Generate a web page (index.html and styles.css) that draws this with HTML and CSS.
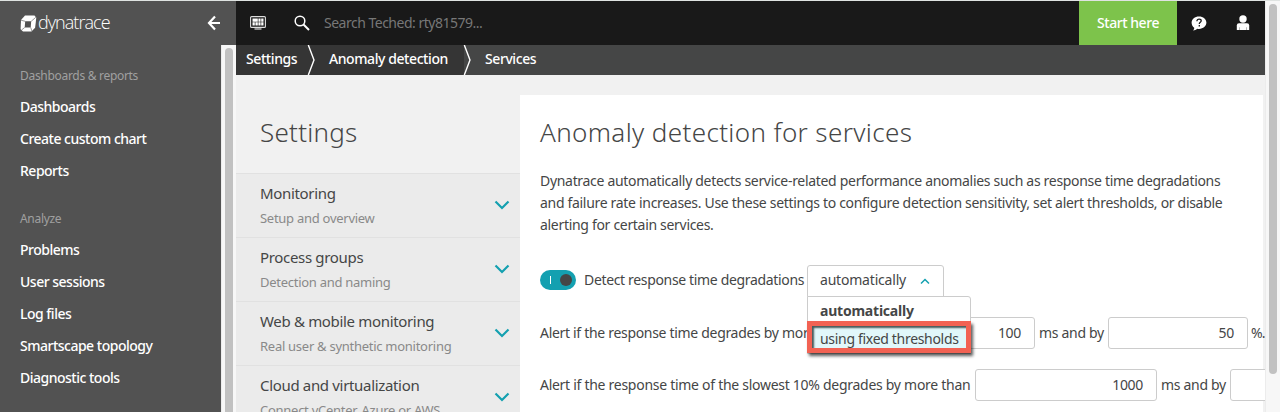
FILE: index.html
```html
<!DOCTYPE html>
<html lang="en">
<head>
<meta charset="utf-8">
<title>Anomaly detection for services</title>
<link rel="stylesheet" href="styles.css">
</head>
<body>
<div class="app">
  <aside class="sidebar">
    <div class="brand">
      <svg class="cube" width="17" height="17" viewBox="0 0 17 17"><path d="M5 .5h9.500l1.800 2.300-1.200 10-3.600 3.700H3L.6 14.200 1 5z" fill="#fff"/><path d="M5.200 6.300h6l-.5 6.200h-6z" fill="#525252"/><path d="M1 5.200l4.200 1.100M11.200 6.300l4.600-4M10.700 12.500l1.300 3.800M4.700 12.500L1.500 15" stroke="#525252" stroke-width=".6"/></svg>
      <span class="wordmark">dynatrace</span>
      <svg class="back" width="14" height="16" viewBox="0 0 14 16" fill="none" stroke="#fff" stroke-width="2.200"><path d="M8 1.500L2 8l6 6.500M1.500 8H13"/></svg>
    </div>
    <nav class="nav">
      <h4 class="group">Dashboards &amp; reports</h4>
      <a class="link">Dashboards</a>
      <a class="link">Create custom chart</a>
      <a class="link">Reports</a>
      <h4 class="group second">Analyze</h4>
      <a class="link">Problems</a>
      <a class="link">User sessions</a>
      <a class="link">Log files</a>
      <a class="link">Smartscape topology</a>
      <a class="link">Diagnostic tools</a>
    </nav>
    <div class="track side-track"><div class="thumb"></div></div>
  </aside>
  <div class="page">
    <header class="topbar">
      <svg class="dash-icon" width="16" height="14" viewBox="0 0 16 14"><rect x=".6" y=".6" width="14.800" height="10.800" rx="1" fill="none" stroke="#ddd" stroke-width="1.100"/><path d="M2.500 2.500h5.300v3.200H2.500zM8.400 2.500h2.200v3.200H8.400zM11.200 2.500h2.300v3.200h-2.300zM2.500 6.300h2.300v3.200H2.500zM5.400 6.300h2.400v3.200H5.400zM8.400 6.300h2.200v3.200H8.400zM11.200 6.300h2.300v3.200h-2.300zM4.500 12.500h7v1h-7z" fill="#fff"/></svg>
      <svg class="search-icon" width="16" height="16" viewBox="0 0 16 16" fill="none" stroke="#fff"><circle cx="6" cy="6" r="4.800" stroke-width="1.500"/><path d="M9.500 9.500l5.500 5.500" stroke-width="2"/></svg>
      <span class="search">Search Teched: rty81579...</span>
      <span class="start">Start here</span>
      <svg class="help" width="16" height="15" viewBox="0 0 16 15"><path d="M8 .4c4.200 0 7.400 2.700 7.400 6.200s-3.200 6.300-7.400 6.300c-.7 0-1.300 0-1.900-.2-.9 1-2.300 1.700-4 1.700.8-.8 1.200-1.600 1.100-2.600C1.500 10.700.6 8.800.6 6.600.6 3.100 3.800.4 8 .4z" fill="#fff"/><path d="M5.900 5.200c0-1.400.9-2.100 2.200-2.100 1.200 0 2.100.7 2.100 1.700 0 1.500-1.900 1.400-1.900 3.100M8.300 9v1.400" fill="none" stroke="#191919" stroke-width="1.300"/></svg>
      <svg class="user" width="14" height="16" viewBox="0 0 14 16" fill="#fff"><circle cx="7" cy="4" r="3.700"/><path d="M.8 15V10.500Q.8 8.200 3 8.200h8q2.200 0 2.200 2.300V15z"/><path d="M3.500 12.300V15M10.500 12.300V15" stroke="#999" stroke-width=".7"/></svg>
    </header>
    <div class="crumbs">
      <span class="crumb c1">Settings</span>
      <svg class="sep" width="9" height="30" viewBox="0 0 9 30"><path d="M1.300 0L7 15 1.300 30" fill="none" stroke="#fff" stroke-width="1.400"/></svg>
      <span class="crumb c2">Anomaly detection</span>
      <svg class="sep" width="9" height="30" viewBox="0 0 9 30"><path d="M1.500 0l5.500 15-5.500 15H9V0z" fill="#454646"/><path d="M1.300 0L7 15 1.300 30" fill="none" stroke="#fff" stroke-width="1.400"/></svg>
      <span class="crumb c3">Services</span>
    </div>
    <div class="content">
      <section class="settings">
        <h1 class="heading left-heading">Settings</h1>
        <div class="item"><div><div class="title">Monitoring</div><div class="sub">Setup and overview</div></div><svg class="chev" width="16" height="10" viewBox="0 0 16 10"><path d="M1.500 1.500L8 8l6.500-6.500"/></svg></div>
        <div class="item"><div><div class="title">Process groups</div><div class="sub">Detection and naming</div></div><svg class="chev" width="16" height="10" viewBox="0 0 16 10"><path d="M1.500 1.500L8 8l6.500-6.500"/></svg></div>
        <div class="item"><div><div class="title">Web &amp; mobile monitoring</div><div class="sub">Real user &amp; synthetic monitoring</div></div><svg class="chev" width="16" height="10" viewBox="0 0 16 10"><path d="M1.500 1.500L8 8l6.500-6.500"/></svg></div>
        <div class="item"><div><div class="title">Cloud and virtualization</div><div class="sub">Connect vCenter, Azure or AWS</div></div><svg class="chev" width="16" height="10" viewBox="0 0 16 10"><path d="M1.500 1.500L8 8l6.500-6.500"/></svg></div>
      </section>
      <main class="panel">
        <h1 class="heading main-heading">Anomaly detection for services</h1>
        <p class="intro"><span>Dynatrace automatically detects service-related performance anomalies such as response time degradations</span><br><span>and failure rate increases. Use these settings to configure detection sensitivity, set alert thresholds, or disable</span><br><span>alerting for certain services.</span></p>
        <div class="row first">
          <span class="toggle"><i class="bar"></i><i class="knob"></i></span>
          <span class="label detect">Detect response time degradations</span>
          <div class="select"><span class="value">automatically</span><svg width="10" height="7" viewBox="0 0 10 7"><path d="M1 5.500l4-4 4 4" fill="none" stroke="#14a0b0" stroke-width="1.500"/></svg>
            <div class="menu"><div class="option selected">automatically</div><div class="option hover">using fixed thresholds</div></div>
          </div>
        </div>
        <div class="row second-row">
          <span class="label a2">Alert if the response time degrades by more than</span>
          <span class="input w182">100</span><span class="unit u2">ms and by</span><span class="input w140">50</span><span class="unit pct">%.</span>
        </div>
        <div class="row third-row">
          <span class="label a3">Alert if the response time of the slowest 10% degrades by more than</span>
          <span class="input w182">1000</span><span class="unit u2">ms and by</span><span class="input w140"></span>
        </div>
      </main>
    </div>
  </div>
  <div class="track page-track"><div class="thumb"></div></div>
</div>
</body>
</html>
```
FILE: styles.css
```css
* { box-sizing: border-box; }
body { margin: 0; overflow: hidden; font: 14px/22px "Noto Sans", sans-serif; letter-spacing: -.31px; color: #454646; }
h1, h4, p { margin: 0; font-weight: 400; }
svg { display: block; flex: none; }
span, a, .title, .sub, .option { white-space: nowrap; }
.app { display: flex; width: 1280px; height: 412px; border-top: 1px solid #dfe3e1; overflow: hidden; }
.sidebar { display: grid; grid-template: 44px 367px / 221px 15px; width: 236px; flex: none; background: #525252; color: #fff; }
.brand { grid-column: 1 / 3; display: flex; align-items: center; padding-left: 20px; }
.wordmark { font: 300 18px/22px "Open Sans", sans-serif; letter-spacing: -.95px; width: 74px; margin: -3px 0 0 1px; }
.back { margin-left: 95px; }
.nav { padding: 20px 0 0 20px; }
.group { font-size: 12px; line-height: 22px; color: #a0a0a0; margin-bottom: 4px; letter-spacing: -.3px; }
.group.second { margin-top: 21px; }
.link { display: block; font-weight: 500; height: 32px; line-height: 32px; letter-spacing: -.5px; }
.track { background: #f7f7f7; border-left: 1px solid #ececec; padding: 3px 3px 0; }
.thumb { width: 8px; border-radius: 4px; background: #c1c1c1; }
.side-track .thumb { height: 380px; }
.page-track { width: 15px; flex: none; }
.page-track .thumb { height: 370px; }
.page { width: 1029px; flex: none; background: #f1f1f1; overflow: hidden; }
.topbar { height: 44px; display: flex; align-items: center; background: #191919; padding-left: 14px; }
.search-icon { margin-left: 28px; }
.search { width: 769px; flex: none; padding-left: 14px; color: #777; letter-spacing: -.5px; }
.start { width: 98px; flex: none; height: 44px; background: #7dc34b; color: #fff; text-align: center; line-height: 43px; font-weight: 500; letter-spacing: -.45px; }
.help { margin-left: 14px; }
.user { margin-left: 29px; }
.crumbs { height: 30px; display: flex; background: linear-gradient(90deg, #353535 228px, #454646 228px); color: #fff; line-height: 28px; font-weight: 500; letter-spacing: -.42px; }
.c1 { width: 71px; padding-left: 10px; }
.c2 { width: 147px; padding-left: 13px; }
.c3 { padding-left: 13px; }
.content { display: flex; height: 337px; }
.settings { width: 284px; flex: none; }
.heading { font-size: 26px; font-weight: 300; line-height: 36px; letter-spacing: .37px; }
.left-heading { padding: 39px 0 0 24px; height: 98px; letter-spacing: .25px; }
.item { height: 64px; background: #ebebeb; border-top: 1px solid #e1e1e1; display: flex; justify-content: space-between; padding: 7px 10px 0 24px; }
.title { font-size: 15px; line-height: 24px; letter-spacing: -.33px; }
.sub { font-size: 13px; line-height: 26px; color: #898989; letter-spacing: -.27px; }
.chev { margin-top: 19px; fill: none; stroke: #14a0b0; stroke-width: 2.200; }
.panel { width: 743px; flex: none; margin-top: 20px; background: #fff; padding: 19px 0 0 20px; }
.intro { padding-top: 20px; height: 98px; }
.row { display: flex; align-items: center; width: 900px; height: 32px; }
.first { margin-top: 17px; }
.second-row, .third-row { margin-top: 20px; }
.toggle { width: 36px; height: 20px; margin: 0 8px 2px 0; border-radius: 10px; background: #14a0b0; display: flex; align-items: center; justify-content: space-between; padding: 0 4px 0 10px; }
.bar { width: 1px; height: 8px; background: #fff; }
.knob { width: 12px; height: 12px; border-radius: 50%; background: #454646; }
.detect { width: 223px; padding-bottom: 3px; letter-spacing: -.34px; }
.select { position: relative; width: 137px; height: 32px; border: 1px solid #ccc; border-radius: 3px 3px 0 0; display: flex; align-items: center; padding: 0 13px 0 12px; justify-content: space-between; }
.value { margin-bottom: 2px; letter-spacing: -.2px; }
.menu { position: absolute; left: -1px; top: 30px; width: 164px; height: 58px; background: #fff; border: 1px solid #ccc; border-radius: 0 3px 0 0; }
.option { padding-left: 12px; line-height: 27px; }
.option.selected { font-weight: 700; height: 24px; letter-spacing: -.22px; }
.option.hover { width: 164px; height: 32px; margin-left: -1px; padding-left: 8px; line-height: 26px; background: #e1f7fa; border: 5px solid #f26253; box-shadow: 2px 3px 3px rgba(0,0,0,.65), inset 2px 2px 2px rgba(30,50,50,.8); }
.a2 { width: 313px; }
.a3 { width: 435px; letter-spacing: -.28px; }
.input { height: 32px; border: 1px solid #ccc; border-radius: 3px; text-align: right; padding-right: 13px; line-height: 30px; background: #fff; flex: none; }
.w182 { width: 182px; }
.w140 { width: 140px; }
.unit { padding-left: 4px; flex: none; }
.u2 { width: 73px; }
.pct { letter-spacing: -1px; padding-left: 3px; }
```
